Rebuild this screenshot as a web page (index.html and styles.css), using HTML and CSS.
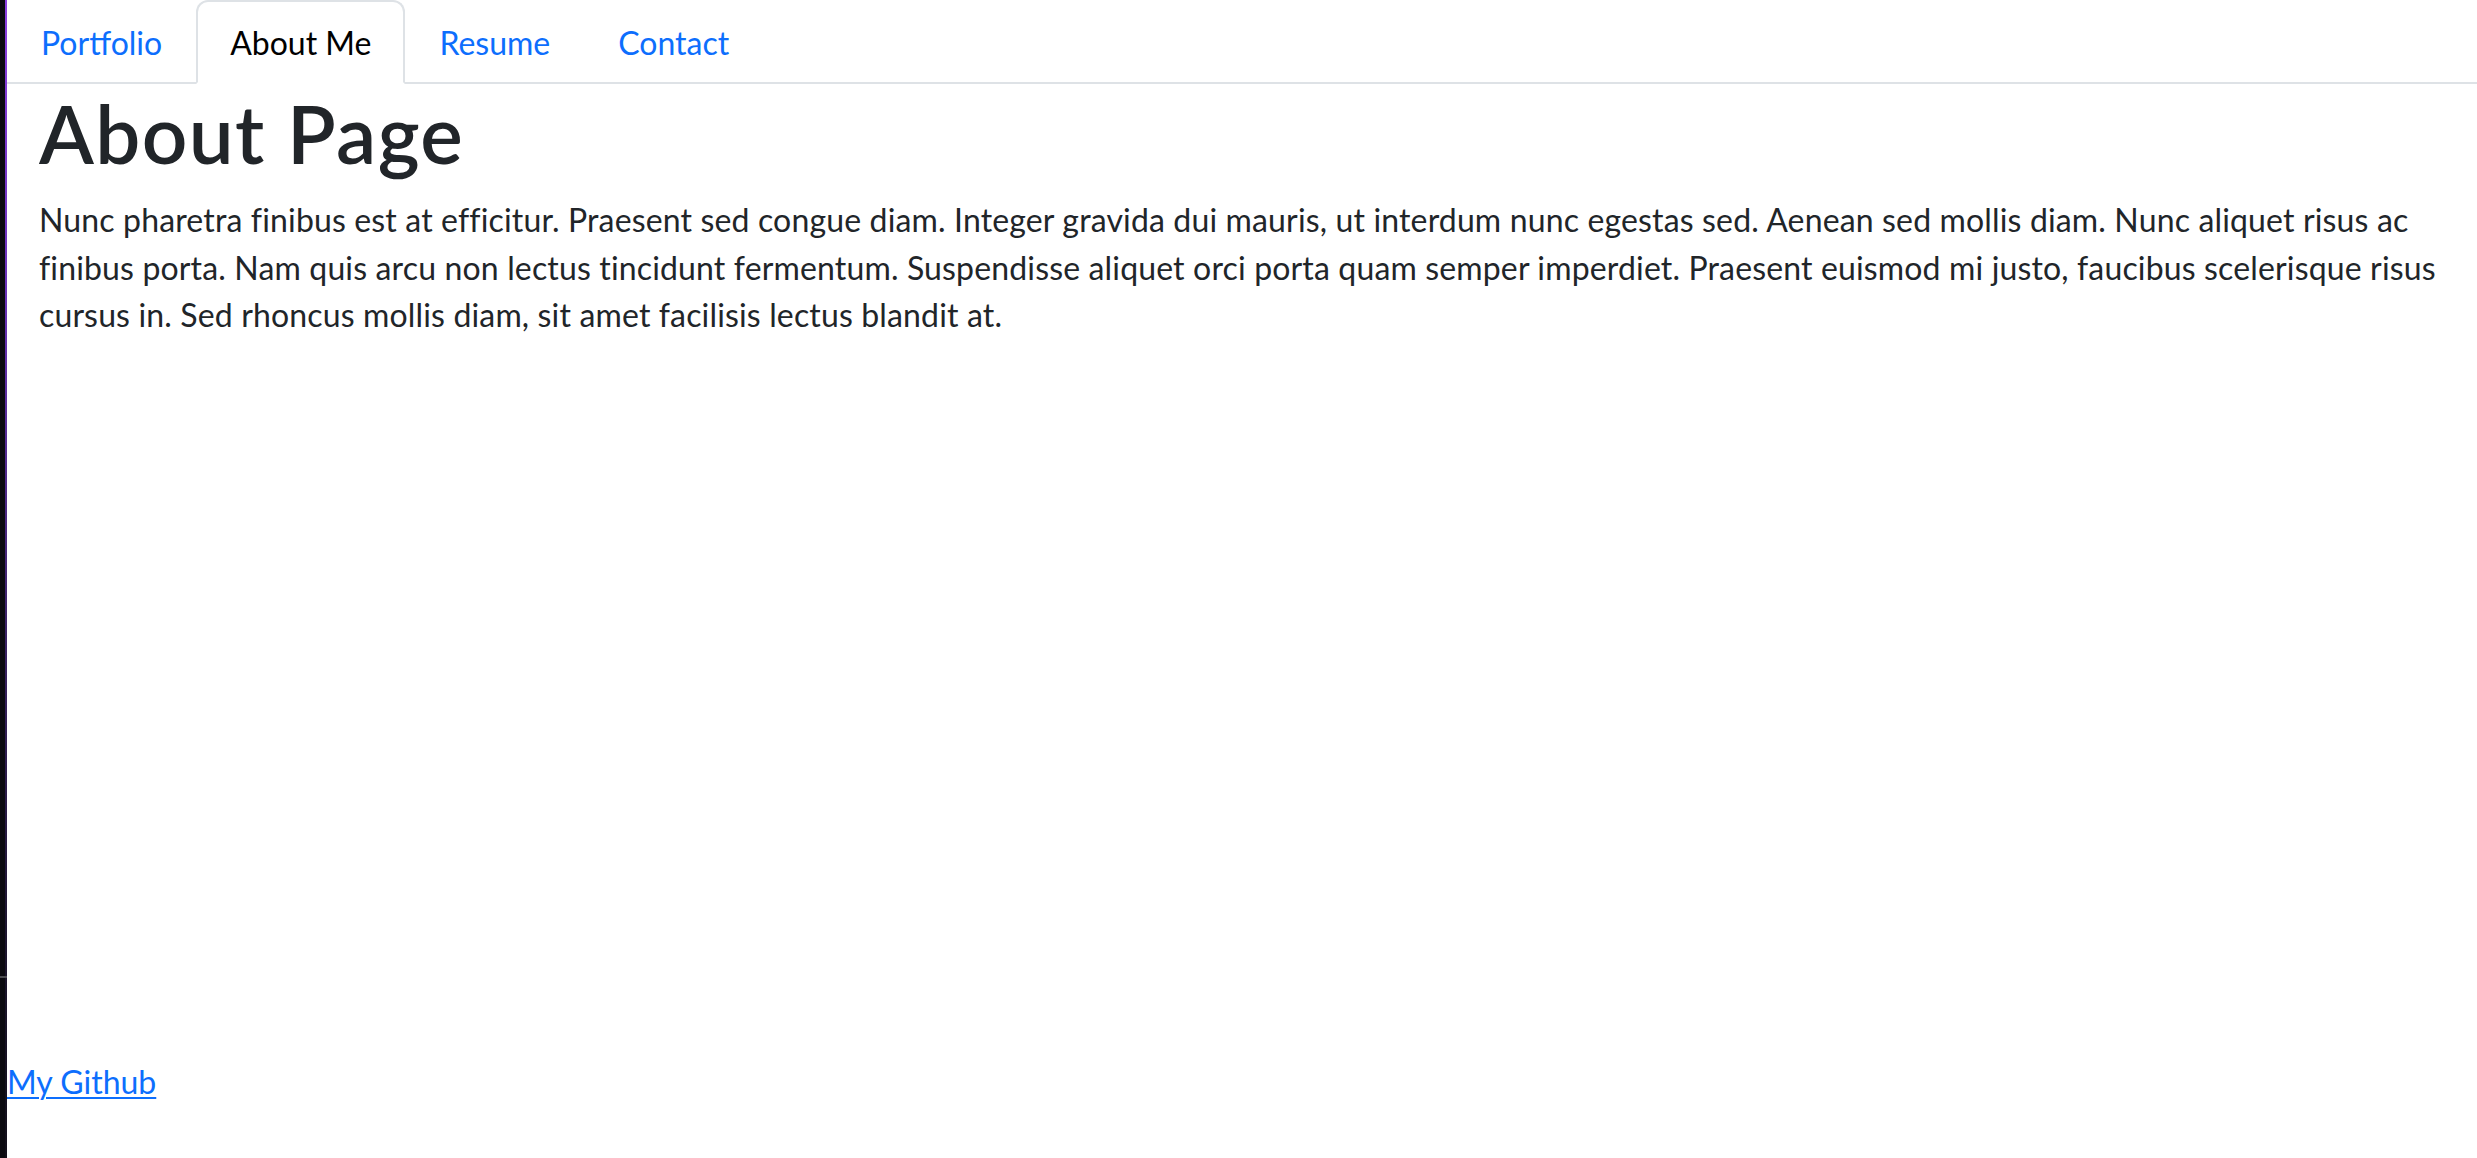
FILE: index.html
```html
<!DOCTYPE html>
<html lang="en">
<head>
<meta charset="utf-8">
<title>About Me</title>
<link rel="stylesheet" href="styles.css">
</head>
<body>
<div class="edge">
  <div class="edge-dark"><div class="edge-tick"></div></div>
  <div class="edge-glow"></div>
</div>
<div class="page">
  <nav class="tabs">
    <ul class="tab-list">
      <li class="tab-item"><a class="tab-link" href="#">Portfolio</a></li>
      <li class="tab-item"><a class="tab-link active" href="#">About Me</a></li>
      <li class="tab-item"><a class="tab-link" href="#">Resume</a></li>
      <li class="tab-item"><a class="tab-link" href="#">Contact</a></li>
    </ul>
  </nav>
  <main class="content">
    <h1 class="title">About Page</h1>
    <p class="text">Nunc pharetra finibus est at efficitur. Praesent sed congue diam. Integer gravida dui mauris, ut interdum nunc egestas sed. Aenean sed mollis diam. Nunc aliquet risus ac finibus porta. Nam quis arcu non lectus tincidunt fermentum. Suspendisse aliquet orci porta quam semper imperdiet. Praesent euismod mi justo, faucibus scelerisque risus cursus in. Sed rhoncus mollis diam, sit amet facilisis lectus blandit at.</p>
  </main>
  <footer class="footer">
    <a class="footer-link" href="#">My Github</a>
  </footer>
</div>
</body>
</html>
```
FILE: styles.css
```css
* { box-sizing: border-box; }

html, body { height: 100%; }

body {
  margin: 0;
  display: flex;
  min-height: 100vh;
  background: #fff;
  color: #212529;
  font-family: Lato, "Noto Sans", sans-serif;
  font-size: 32px;
  line-height: 48px;
}

.edge {
  flex: 0 0 7px;
  display: flex;
}

.edge-dark {
  flex: 0 0 5px;
  background: #0b0a10;
  padding-top: 976px;
}

.edge-tick {
  height: 2px;
  background: #4d4d52;
  margin-right: -2px;
  position: relative;
}

.edge-glow {
  flex: 0 0 2px;
  background: linear-gradient(to bottom, #8c3fe0 0%, #6a32b8 25%, #3a2264 55%, #1d1530 80%, #120f1a 100%);
}

.page {
  flex: 1;
  display: flex;
  flex-direction: column;
  min-width: 0;
}

.tabs {
  border-bottom: 2px solid #dee2e6;
}

.tab-list {
  list-style: none;
  margin: 0;
  padding: 0;
  display: flex;
}

.tab-item {
  margin-bottom: -2px;
}

.tab-link {
  display: block;
  padding: 17px 32px 15px;
  border: 2px solid transparent;
  border-radius: 12px 12px 0 0;
  color: #0d6efd;
  text-decoration: none;
  font-size: 32px;
  line-height: 48px;
}

.tab-link.active {
  color: #000;
  background: #fff;
  border-color: #dee2e6 #dee2e6 #fff;
}

.content {
  flex: 1;
  padding: 0 32px;
}

.title {
  margin: 0 0 16px;
  padding-top: 2px;
  font-size: 80px;
  line-height: 94px;
  font-weight: 600;
  letter-spacing: 1.4px;
  color: #212529;
}

.text {
  margin: 0;
  font-size: 32px;
  line-height: 47.5px;
  letter-spacing: 0.15px;
  color: #212529;
}

.footer {
  margin-bottom: 52px;
}

.footer-link {
  color: #0d6efd;
  font-size: 32px;
  line-height: 48px;
  text-decoration: underline;
  text-decoration-thickness: 2px;
  text-underline-offset: 3px;
}
```
